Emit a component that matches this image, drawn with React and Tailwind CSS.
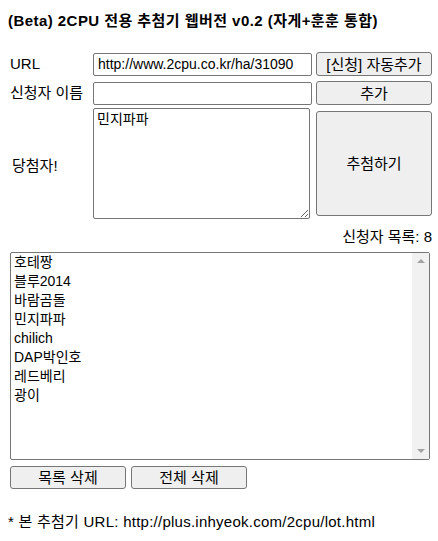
import React from 'react';

const names = ['호테짱', '블루2014', '바람곰돌', '민지파파', 'chilich', 'DAP박인호', '레드베리', '광이'];

const btn = 'bg-[#efefef] border border-[#767676] rounded-[3px] text-[15px] leading-none text-black';

const App = () => {
  return (
    <div className="w-[438px] h-[541px] bg-white text-black font-['Liberation_Sans','Noto_Sans_CJK_KR',sans-serif]">
      <h1 className="pl-2 pt-[11px] text-[15px] font-bold leading-[20px] tracking-[0.45px]">
        (Beta) 2CPU 전용 추첨기 웹버전 v0.2 (자게+훈훈 통합)
      </h1>

      {/* URL */}
      <div className="mt-[21px] flex items-center h-[24px] pl-[10px]">
        <span className="w-[83px] text-[15px]">URL</span>
        <input
          readOnly
          value="http://www.2cpu.co.kr/ha/31090"
          className="w-[219px] h-[23px] border border-[#767676] rounded-[2px] px-[4px] text-[14px] outline-none"
        />
        <button className={`ml-[4px] w-[116px] h-[24px] ${btn}`}>[신청] 자동추가</button>
      </div>

      {/* name */}
      <div className="mt-[5px] flex items-center h-[24px] pl-[10px]">
        <span className="w-[83px] text-[15px]">신청자 이름</span>
        <input
          readOnly
          value=""
          className="w-[219px] h-[23px] border border-[#767676] rounded-[2px] px-[4px] text-[14px] outline-none"
        />
        <button className={`ml-[4px] w-[116px] h-[24px] ${btn}`}>추가</button>
      </div>

      {/* winner */}
      <div className="mt-[3px] flex items-center h-[111px] pl-[10px]">
        <span className="w-[83px] text-[15px] pl-[2px] pt-[5px]">당첨자!</span>
        <textarea
          readOnly
          defaultValue="민지파파"
          className="w-[217px] h-[111px] border border-[#767676] rounded-[2px] px-[3px] py-[2px] text-[14px] leading-[17px] outline-none resize"
        />
        <button className={`ml-[6px] w-[116px] h-[105px] ${btn}`}>추첨하기</button>
      </div>

      <div className="mt-[8px] pr-[6px] text-right text-[15px] leading-[20px]">신청자 목록: 8</div>

      {/* list */}
      <div className="mt-[5px] ml-[10px] w-[420px] h-[208px] border border-[#767676] rounded-[2px] flex">
        <div className="flex-1 px-[3px] text-[14px] leading-[19px]">
          {names.map(n => (
            <div key={n}>{n}</div>
          ))}
        </div>
        <div className="w-[17px] bg-[#f1f1f1] flex flex-col justify-between items-center py-[6px]">
          <div className="w-0 h-0 border-l-[4px] border-r-[4px] border-b-[4px] border-l-transparent border-r-transparent border-b-[#a3a3a3]" />
          <div className="w-0 h-0 border-l-[4px] border-r-[4px] border-t-[4px] border-l-transparent border-r-transparent border-t-[#a3a3a3]" />
        </div>
      </div>

      <div className="mt-[6px] ml-[10px] flex gap-[5px]">
        <button className={`w-[116px] h-[23px] ${btn}`}>목록 삭제</button>
        <button className={`w-[116px] h-[23px] ${btn}`}>전체 삭제</button>
      </div>

      <p className="mt-[23px] pl-2 text-[15px] leading-[20px] tracking-[0.25px]">* 본 추첨기 URL: http://plus.inhyeok.com/2cpu/lot.html</p>
    </div>
  );
};

export default App;
